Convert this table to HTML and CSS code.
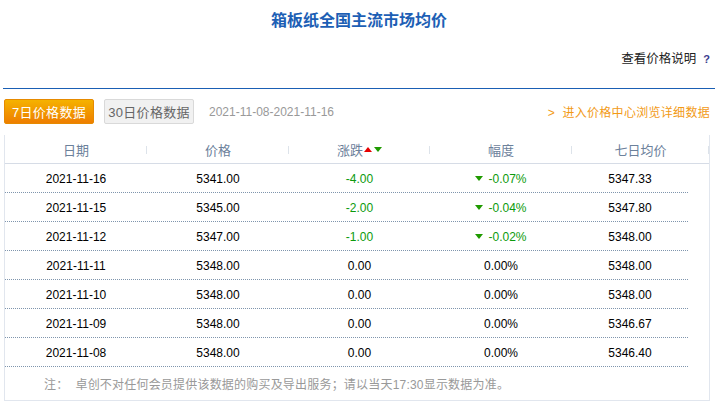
FILE: index.html
```html
<!DOCTYPE html>
<html lang="zh-CN">
<head>
<meta charset="utf-8">
<title>箱板纸全国主流市场均价</title>
<link rel="stylesheet" href="styles.css">
</head>
<body>
<div class="page">
  <h1 class="title">箱板纸全国主流市场均价</h1>
  <div class="help"><span>查看价格说明</span><span class="q">?</span></div>
  <div class="divider"></div>
  <div class="toolbar">
    <div class="left">
      <span class="btn btn-on">7日价格数据</span>
      <span class="btn btn-off">30日价格数据</span>
      <span class="range">2021-11-08-2021-11-16</span>
    </div>
    <a class="more">&gt;&nbsp;&nbsp;进入价格中心浏览详细数据</a>
  </div>
  <div class="box">
    <div class="head">
      <div class="hc">日期</div>
      <div class="hc">价格</div>
      <div class="hc">涨跌<span class="tri-up"></span><span class="tri-down"></span></div>
      <div class="hc">幅度</div>
      <div class="hc">七日均价</div>
    </div>
    <div class="rows">
      <div class="row"><div>2021-11-16</div><div>5341.00</div><div class="g">-4.00</div><div class="g"><span class="tri-down"></span>-0.07%</div><div>5347.33</div></div>
      <div class="row"><div>2021-11-15</div><div>5345.00</div><div class="g">-2.00</div><div class="g"><span class="tri-down"></span>-0.04%</div><div>5347.80</div></div>
      <div class="row"><div>2021-11-12</div><div>5347.00</div><div class="g">-1.00</div><div class="g"><span class="tri-down"></span>-0.02%</div><div>5348.00</div></div>
      <div class="row"><div>2021-11-11</div><div>5348.00</div><div>0.00</div><div>0.00%</div><div>5348.00</div></div>
      <div class="row"><div>2021-11-10</div><div>5348.00</div><div>0.00</div><div>0.00%</div><div>5348.00</div></div>
      <div class="row"><div>2021-11-09</div><div>5348.00</div><div>0.00</div><div>0.00%</div><div>5346.67</div></div>
      <div class="row"><div>2021-11-08</div><div>5348.00</div><div>0.00</div><div>0.00%</div><div>5346.40</div></div>
    </div>
    <div class="note">注：&nbsp;&nbsp;卓创不对任何会员提供该数据的购买及导出服务；请以当天17:30显示数据为准。</div>
  </div>
</div>
</body>
</html>
```

FILE: styles.css
```css
* { box-sizing: border-box; }
html, body { margin: 0; padding: 0; background: #fff; }
body {
  font-family: "Liberation Sans", "Noto Sans CJK SC", sans-serif;
  font-size: 12px;
  color: #000;
}
.page { width: 718px; height: 405px; overflow: hidden; }
.title {
  margin: 11px 0 0;
  font-size: 16px;
  line-height: 20px;
  font-weight: bold;
  text-align: center;
  color: #1d5fb5;
}
.help {
  margin-top: 19px;
  display: flex;
  justify-content: flex-end;
  align-items: center;
  gap: 7px;
  padding-right: 8px;
  font-size: 12.5px;
  line-height: 18px;
  color: #222;
}
.help .q { font-size: 11px; font-weight: bold; color: #3b3b8e; }
.divider {
  margin: 20px 3px 0;
  border-top: 1px solid #1a5fb4;
}
.toolbar {
  margin-top: 10px;
  display: flex;
  justify-content: space-between;
  align-items: center;
  padding: 0 8px 0 4px;
}
.left { display: flex; align-items: center; }
.btn {
  display: inline-flex;
  align-items: center;
  justify-content: center;
  height: 25px;
  width: 90px;
  font-size: 13px;
  border-radius: 2px;
  letter-spacing: 0.3px;
}
.btn-on {
  color: #fff;
  background: linear-gradient(#f5b200, #ee7e00);
  border: 1px solid #e68a00;
}
.btn-off {
  margin-left: 10px;
  color: #666;
  background: #f1f1f1;
  border: 1px solid #d9d9d9;
}
.range { margin-left: 15px; color: #999; font-size: 12px; }
.more { color: #f29a16; font-size: 12px; letter-spacing: 0.3px; text-decoration: none; }
.box {
  margin: 11px 8px 0 4px;
  border: 1px solid #e1e6ee;
  border-top: none;
  height: 266px;
}
.head {
  display: grid;
  grid-template-columns: 142px 142px 141px 142px 1fr;
  height: 29px;
  border-bottom: 1px solid #d6dce6;
}
.hc {
  position: relative;
  display: flex;
  align-items: center;
  justify-content: center;
  font-size: 13px;
  color: #6c819b;
}
.hc::after {
  content: "";
  position: absolute;
  right: 0;
  top: 11px;
  height: 8px;
  border-right: 1px solid #dde3ea;
}
.tri-up, .tri-down {
  display: inline-block;
  width: 0; height: 0;
  border-left: 4px solid transparent;
  border-right: 4px solid transparent;
}
.tri-up { border-bottom: 5px solid #e60000; margin-left: 1px; }
.tri-down { border-top: 5px solid #1f9a00; margin-left: 2px; }
.g .tri-down { margin: 0 5px 0 0; }
.rows { width: 683px; }
.row {
  display: grid;
  grid-template-columns: 142px 142px 141px 142px 1fr;
  height: 29px;
  border-bottom: 1px dotted #7f95ad;
}
.row > div {
  display: flex;
  align-items: center;
  justify-content: center;
  padding-top: 1px;
  font-size: 12px;
}
.row > .g { color: #0c9a0c; }
.note {
  padding-left: 39px;
  height: 33px;
  display: flex;
  align-items: center;
  color: #999;
  font-size: 12px;
  letter-spacing: 0.2px;
}
```
